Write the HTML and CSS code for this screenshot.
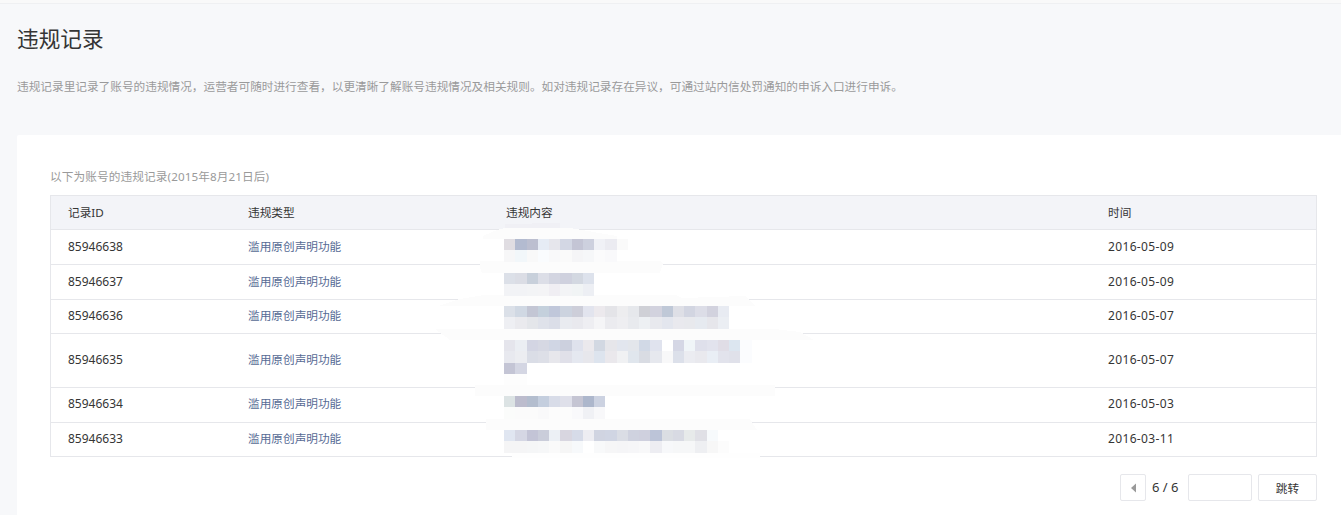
FILE: index.html
```html
<!DOCTYPE html>
<html lang="zh-CN">
<head>
<meta charset="utf-8">
<title>违规记录</title>
<link rel="stylesheet" href="styles.css">
</head>
<body>
<div class="page">
  <div class="topbar"></div>
  <h1 class="title">违规记录</h1>
  <p class="desc">违规记录里记录了账号的违规情况，运营者可随时进行查看，以更清晰了解账号违规情况及相关规则。如对违规记录存在异议，可通过站内信处罚通知的申诉入口进行申诉。</p>
  <main class="card">
    <p class="note">以下为账号的违规记录(2015年8月21日后)</p>
    <table class="records">
      <thead>
        <tr><th class="c1">记录ID</th><th class="c2">违规类型</th><th class="c3">违规内容</th><th>时间</th></tr>
      </thead>
      <tbody>
        <tr class="h35"><td class="num">85946638</td><td class="kind"><a class="link">滥用原创声明功能</a></td><td></td><td class="date">2016-05-09</td></tr>
        <tr class="h35"><td class="num">85946637</td><td class="kind"><a class="link">滥用原创声明功能</a></td><td></td><td class="date">2016-05-09</td></tr>
        <tr class="h34"><td class="num">85946636</td><td class="kind"><a class="link">滥用原创声明功能</a></td><td></td><td class="date">2016-05-07</td></tr>
        <tr class="h54"><td class="num">85946635</td><td class="kind"><a class="link">滥用原创声明功能</a></td><td></td><td class="date">2016-05-07</td></tr>
        <tr class="h35 up"><td class="num">85946634</td><td class="kind"><a class="link">滥用原创声明功能</a></td><td></td><td class="date">2016-05-03</td></tr>
        <tr class="h34"><td class="num">85946633</td><td class="kind"><a class="link">滥用原创声明功能</a></td><td></td><td class="date">2016-03-11</td></tr>
      </tbody>
    </table>
    <div class="pager">
      <button class="pbtn prev" type="button" aria-label="上一页"><svg width="7" height="10" viewBox="0 0 7 10"><path d="M6 0.5V9.5L1 5Z" fill="#9a9a9a"/></svg></button>
      <span class="count">6 / 6</span>
      <input class="goto" type="text" aria-label="页码">
      <button class="pbtn jump" type="button">跳转</button>
    </div>
  </main>
  <svg class="blur" width="1341" height="515" viewBox="0 0 1341 515" aria-hidden="true" shape-rendering="crispEdges">
    <path fill="#f0f0f5" d="M505 224L560 223V229H505Z"/>
    <g fill="#fcfcfc">
      <path d="M483 239V236L497 230L505 228H570L617 236V239Z"/>
      <path d="M480 261H660L663 263L660 273H482L480 268Z"/>
      <path d="M438 306L460 299L484 295H676L682 298L745 296L755 306Z"/>
      <path d="M435 329H775L800 332L814 340H450Z"/>
      <path d="M475 385H775V396H475Z"/>
      <path d="M486 419H750L757 430H486Z"/>
    </g>
    <path fill="#fefefe" d="M512 453H760V458H512Z"/>
    <g transform="translate(504 239) scale(11.25)">
      <rect width="1" height="1" x="0" fill="#e0dde2"/><rect width="1" height="1" x="1" fill="#b3bbd0"/><rect width="1" height="1" x="2" fill="#bcbfd0"/><rect width="1" height="1" x="3" fill="#e6ecf5"/><rect width="1" height="1" x="4" fill="#e6e6ec"/><rect width="1" height="1" x="5" fill="#d3d7e4"/><rect width="1" height="1" x="6" fill="#c4c5d5"/><rect width="1" height="1" x="7" fill="#cdd0de"/><rect width="1" height="1" x="8" fill="#f0f1f6"/><rect width="1" height="1" x="9" fill="#ebebf1"/><rect width="1" height="1" x="10" fill="#fafafa"/>
      <rect width="1" height="1" y="1" x="0" fill="#f7f7f8"/><rect width="1" height="1" y="1" x="1" fill="#f2f7fa"/><rect width="1" height="1" y="1" x="2" fill="#f9f9f9"/><rect width="1" height="1" y="1" x="3" fill="#fafcfe"/><rect width="1" height="1" y="1" x="4" fill="#f9f9fa"/><rect width="1" height="1" y="1" x="5" fill="#fafafa"/><rect width="1" height="1" y="1" x="6" fill="#f5f5f7"/><rect width="1" height="1" y="1" x="7" fill="#f6f7f9"/><rect width="1" height="1" y="1" x="8" fill="#fbfbfc"/><rect width="1" height="1" y="1" x="9" fill="#f9f9fb"/>
    </g>
    <g transform="translate(504 273) scale(11.25)">
      <rect width="1" height="1" x="0" fill="#dce0e8"/><rect width="1" height="1" x="1" fill="#dbdde5"/><rect width="1" height="1" x="2" fill="#c8d0db"/><rect width="1" height="1" x="3" fill="#dcdee7"/><rect width="1" height="1" x="4" fill="#d3d5e1"/><rect width="1" height="1" x="5" fill="#cfd1de"/><rect width="1" height="1" x="6" fill="#d3d8e1"/><rect width="1" height="1" x="7" fill="#dde2ec"/>
      <rect width="1" height="1" y="1" x="0" fill="#f2f3f6"/><rect width="1" height="1" y="1" x="1" fill="#f2f3f6"/><rect width="1" height="1" y="1" x="2" fill="#f3f4f6"/><rect width="1" height="1" y="1" x="3" fill="#f4f4f6"/><rect width="1" height="1" y="1" x="4" fill="#f0eef3"/><rect width="1" height="1" y="1" x="5" fill="#f3f4f6"/><rect width="1" height="1" y="1" x="6" fill="#f1f4f5"/><rect width="1" height="1" y="1" x="7" fill="#edeff4"/>
    </g>
    <g transform="translate(504 306) scale(11.25)">
      <rect width="1" height="1" x="0" fill="#dbe0e8"/><rect width="1" height="1" x="1" fill="#d0d8e3"/><rect width="1" height="1" x="2" fill="#c3c6d4"/><rect width="1" height="1" x="3" fill="#c4d0dc"/><rect width="1" height="1" x="4" fill="#c0c7da"/><rect width="1" height="1" x="5" fill="#ccd3df"/><rect width="1" height="1" x="6" fill="#cdced9"/><rect width="1" height="1" x="7" fill="#e2e4ee"/><rect width="1" height="1" x="8" fill="#ece9ed"/><rect width="1" height="1" x="9" fill="#e4e4e8"/><rect width="1" height="1" x="10" fill="#ededef"/><rect width="1" height="1" x="11" fill="#e6e8ec"/><rect width="1" height="1" x="12" fill="#cfd0d6"/><rect width="1" height="1" x="13" fill="#d2d2de"/><rect width="1" height="1" x="14" fill="#bfc8d7"/><rect width="1" height="1" x="15" fill="#dedfe6"/><rect width="1" height="1" x="16" fill="#d2d5e1"/><rect width="1" height="1" x="17" fill="#dcdde7"/><rect width="1" height="1" x="18" fill="#d2d2de"/><rect width="1" height="1" x="19" fill="#e8ebf2"/>
      <rect width="1" height="1" y="1" x="0" fill="#eeeff3"/><rect width="1" height="1" y="1" x="1" fill="#eaeaee"/><rect width="1" height="1" y="1" x="2" fill="#e4e6ea"/><rect width="1" height="1" y="1" x="3" fill="#dfe2ea"/><rect width="1" height="1" y="1" x="4" fill="#dbdee8"/><rect width="1" height="1" y="1" x="5" fill="#e9ebf0"/><rect width="1" height="1" y="1" x="6" fill="#e9e9ee"/><rect width="1" height="1" y="1" x="7" fill="#eeeef2"/><rect width="1" height="1" y="1" x="8" fill="#f5f5f7"/><rect width="1" height="1" y="1" x="9" fill="#ebebef"/><rect width="1" height="1" y="1" x="10" fill="#eeeef1"/><rect width="1" height="1" y="1" x="11" fill="#e8eaee"/><rect width="1" height="1" y="1" x="12" fill="#edf0f3"/><rect width="1" height="1" y="1" x="13" fill="#e8e9ee"/><rect width="1" height="1" y="1" x="14" fill="#e3e6ee"/><rect width="1" height="1" y="1" x="15" fill="#e9e9ee"/><rect width="1" height="1" y="1" x="16" fill="#e8e9ed"/><rect width="1" height="1" y="1" x="17" fill="#e6eaf0"/><rect width="1" height="1" y="1" x="18" fill="#e6e6eb"/><rect width="1" height="1" y="1" x="19" fill="#ebeef3"/>
    </g>
    <g transform="translate(504 340) scale(11.25)">
      <rect width="1" height="1" x="0" fill="#e5e5ec"/><rect width="1" height="1" x="1" fill="#ebeef3"/><rect width="1" height="1" x="2" fill="#d3d5e3"/><rect width="1" height="1" x="3" fill="#d6d8e3"/><rect width="1" height="1" x="4" fill="#d0d6e4"/><rect width="1" height="1" x="5" fill="#ccd0de"/><rect width="1" height="1" x="6" fill="#dfe2ed"/><rect width="1" height="1" x="7" fill="#ebe9ed"/><rect width="1" height="1" x="8" fill="#d2d8e2"/><rect width="1" height="1" x="9" fill="#e6e6ea"/><rect width="1" height="1" x="10" fill="#e2e6ee"/><rect width="1" height="1" x="11" fill="#e3e6eb"/><rect width="1" height="1" x="12" fill="#d1d9e6"/><rect width="1" height="1" x="13" fill="#e0e3ee"/><rect width="1" height="1" x="15" fill="#d5d7e5"/><rect width="1" height="1" x="16" fill="#f0f5f8"/><rect width="1" height="1" x="17" fill="#dfe0eb"/><rect width="1" height="1" x="18" fill="#e2e3ed"/><rect width="1" height="1" x="19" fill="#e0dde6"/><rect width="1" height="1" x="20" fill="#dce6f0"/><rect width="1" height="1" x="21" fill="#fbfcfe"/>
      <rect width="1" height="1" y="1" x="0" fill="#e8e9ef"/><rect width="1" height="1" y="1" x="1" fill="#ecedf1"/><rect width="1" height="1" y="1" x="2" fill="#dadde6"/><rect width="1" height="1" y="1" x="3" fill="#dddfe7"/><rect width="1" height="1" y="1" x="4" fill="#e7e7ec"/><rect width="1" height="1" y="1" x="5" fill="#e0e0e9"/><rect width="1" height="1" y="1" x="6" fill="#e5e8f0"/><rect width="1" height="1" y="1" x="7" fill="#e7e7ec"/><rect width="1" height="1" y="1" x="8" fill="#dde4ee"/><rect width="1" height="1" y="1" x="9" fill="#eae8ec"/><rect width="1" height="1" y="1" x="10" fill="#f0f1f3"/><rect width="1" height="1" y="1" x="11" fill="#e0e6ed"/><rect width="1" height="1" y="1" x="12" fill="#d9dce3"/><rect width="1" height="1" y="1" x="13" fill="#e6e8ee"/><rect width="1" height="1" y="1" x="14" fill="#f8f8f9"/><rect width="1" height="1" y="1" x="15" fill="#dce0ea"/><rect width="1" height="1" y="1" x="16" fill="#ebecf1"/><rect width="1" height="1" y="1" x="17" fill="#e9e9ee"/><rect width="1" height="1" y="1" x="18" fill="#e9eef5"/><rect width="1" height="1" y="1" x="19" fill="#e2e3ec"/><rect width="1" height="1" y="1" x="20" fill="#e0e1ea"/><rect width="1" height="1" y="1" x="21" fill="#fbfcfe"/>
      <rect width="1" height="1" y="2" x="0" fill="#c4c5d5"/><rect width="1" height="1" y="2" x="1" fill="#d4d6e3"/>
      <rect width="1" height="1" y="3" x="0" fill="#fdfdfd"/><rect width="1" height="1" y="3" x="1" fill="#fdfdfd"/>
    </g>
    <g transform="translate(504 396) scale(11.25)">
      <rect width="1" height="1" x="0" fill="#dce3e4"/><rect width="1" height="1" x="1" fill="#bcbccd"/><rect width="1" height="1" x="2" fill="#b3bdce"/><rect width="1" height="1" x="3" fill="#c4cede"/><rect width="1" height="1" x="4" fill="#d8dce8"/><rect width="1" height="1" x="5" fill="#dfe0ea"/><rect width="1" height="1" x="6" fill="#c5c5d3"/><rect width="1" height="1" x="7" fill="#adb7cc"/><rect width="1" height="1" x="8" fill="#ccd2e1"/>
      <rect width="1" height="1" y="1" x="0" fill="#fbfcfb"/><rect width="1" height="1" y="1" x="1" fill="#fbfbfb"/><rect width="1" height="1" y="1" x="2" fill="#fbfbfb"/><rect width="1" height="1" y="1" x="3" fill="#f9f9fa"/><rect width="1" height="1" y="1" x="4" fill="#fcfcfc"/><rect width="1" height="1" y="1" x="5" fill="#fcfcfc"/><rect width="1" height="1" y="1" x="6" fill="#f9f9fb"/><rect width="1" height="1" y="1" x="7" fill="#f0f1f5"/><rect width="1" height="1" y="1" x="8" fill="#f8f8fa"/>
    </g>
    <g transform="translate(504 430) scale(11.25)">
      <rect width="1" height="1" x="0" fill="#e0e6f1"/><rect width="1" height="1" x="1" fill="#d5d7e4"/><rect width="1" height="1" x="2" fill="#c3c4d6"/><rect width="1" height="1" x="3" fill="#cacdda"/><rect width="1" height="1" x="4" fill="#ecf0f5"/><rect width="1" height="1" x="5" fill="#d8d6e0"/><rect width="1" height="1" x="6" fill="#d6dbe8"/><rect width="1" height="1" x="7" fill="#ededf2"/><rect width="1" height="1" x="8" fill="#d0d4e1"/><rect width="1" height="1" x="9" fill="#d0d5e3"/><rect width="1" height="1" x="10" fill="#dadde5"/><rect width="1" height="1" x="11" fill="#cfd2df"/><rect width="1" height="1" x="12" fill="#cfd0de"/><rect width="1" height="1" x="13" fill="#bcc4d8"/><rect width="1" height="1" x="14" fill="#dbdee3"/><rect width="1" height="1" x="15" fill="#d8dae3"/><rect width="1" height="1" x="16" fill="#e7eaea"/><rect width="1" height="1" x="17" fill="#e0e0e6"/><rect width="1" height="1" x="18" fill="#f7fafc"/>
      <rect width="1" height="1" y="1" x="0" fill="#f5f5f6"/><rect width="1" height="1" y="1" x="1" fill="#f5f5f6"/><rect width="1" height="1" y="1" x="2" fill="#f5f6f7"/><rect width="1" height="1" y="1" x="3" fill="#f6f7f8"/><rect width="1" height="1" y="1" x="4" fill="#fafafa"/><rect width="1" height="1" y="1" x="5" fill="#f6f6f6"/><rect width="1" height="1" y="1" x="6" fill="#f7f9fb"/><rect width="1" height="1" y="1" x="8" fill="#f8f9fa"/><rect width="1" height="1" y="1" x="9" fill="#f6f6f7"/><rect width="1" height="1" y="1" x="10" fill="#f5f5f7"/><rect width="1" height="1" y="1" x="11" fill="#f6f6f8"/><rect width="1" height="1" y="1" x="12" fill="#f8f8f9"/><rect width="1" height="1" y="1" x="13" fill="#ededf2"/><rect width="1" height="1" y="1" x="14" fill="#f7f8fa"/><rect width="1" height="1" y="1" x="15" fill="#f6f7f8"/><rect width="1" height="1" y="1" x="16" fill="#f6f7f8"/><rect width="1" height="1" y="1" x="17" fill="#eeeff2"/><rect width="1" height="1" y="1" x="18" fill="#f7f7f7"/><rect width="1" height="1" y="1" x="19" fill="#fcfcfc"/>
    </g>
  </svg>
</div>
</body>
</html>
```

FILE: styles.css
```css
* { box-sizing: border-box; }
html, body { margin: 0; padding: 0; }
body {
  background: #f7f8fa;
  color: #353535;
  font-family: "Noto Sans", "Noto Sans CJK SC", sans-serif;
  font-size: 11.67px;
  overflow: hidden;
}
.page {
  position: relative;
  width: 1341px;
  height: 515px;
  overflow: hidden;
}
.topbar {
  height: 4px;
  background: #f9f9f9;
  border-bottom: 1px solid #eff0f2;
}
.title {
  margin: 20px 0 0 17px;
  font-size: 21.67px;
  line-height: 30px;
  font-weight: 400;
  color: #353535;
}
.desc {
  margin: 23px 0 0 17px;
  font-size: 11.67px;
  line-height: 20px;
  color: #9a9a9a;
}
.card {
  margin: 38px 0 0 17px;
  height: 380px;
  padding: 33px 24px 0 33px;
  background: #fff;
  border-radius: 2px 0 0 0;
}
.note {
  margin: 0;
  font-size: 11.67px;
  line-height: 18px;
  letter-spacing: 0.1px;
  color: #9a9a9a;
}
.records {
  margin-top: 9px;
  width: 1267px;
  table-layout: fixed;
  border-collapse: separate;
  border-spacing: 0;
  border: 1px solid #e6e7eb;
  border-bottom: 0;
}
.records th,
.records td {
  padding: 0 0 2px 17px;
  font-size: 11.67px;
  font-weight: 400;
  text-align: left;
  color: #353535;
  border-bottom: 1px solid #e6e7eb;
}
.records th {
  height: 34px;
  background: #f3f4f8;
}
.records .num { font-size: 12px; }
.records .date {
  font-size: 12px;
  letter-spacing: 0.35px;
}
.records .kind { padding-bottom: 4px; }
.records .up td { padding-bottom: 4px; }
.records .up .kind { padding-bottom: 6px; }
.c1 { width: 180px; }
.c2 { width: 258px; }
.c3 { width: 602px; }
.h34 td { height: 34px; }
.h35 td { height: 35px; }
.h54 td { height: 54px; }
.link { color: #576b95; }
.pager {
  display: flex;
  justify-content: flex-end;
  align-items: center;
  margin-top: 17px;
  height: 27px;
}
.pbtn {
  height: 27px;
  padding: 0;
  background: #fff;
  border: 1px solid #e6e7eb;
  border-radius: 2px;
  font: inherit;
  color: #353535;
}
.prev {
  display: flex;
  align-items: center;
  justify-content: center;
  width: 26px;
}
.count {
  width: 42px;
  padding: 0 0 2px 6px;
  font-size: 13px;
  color: #353535;
}
.goto {
  width: 64px;
  height: 27px;
  border: 1px solid #e6e7eb;
  border-radius: 2px;
  background: #fff;
}
.jump {
  width: 59px;
  margin-left: 6px;
}
.blur {
  position: absolute;
  top: 0;
  left: 0;
  pointer-events: none;
}
```
